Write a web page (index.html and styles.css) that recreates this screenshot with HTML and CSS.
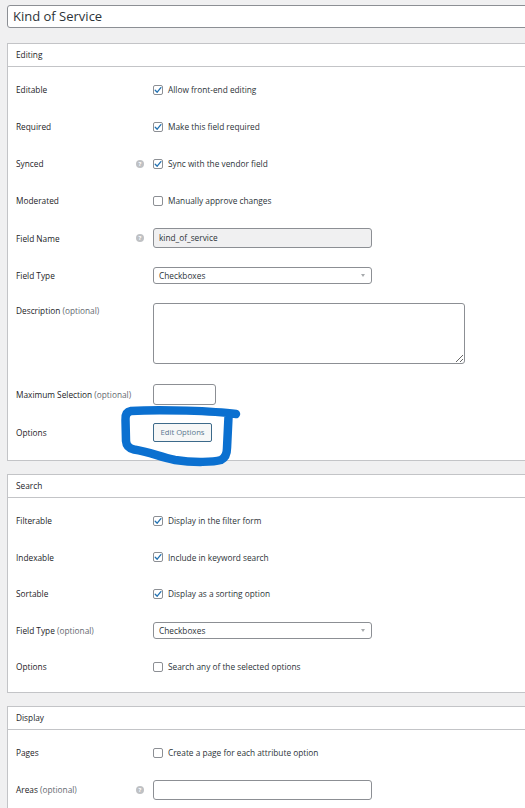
FILE: index.html
```html
<!DOCTYPE html>
<html lang="en">
<head>
<meta charset="utf-8">
<title>Kind of Service</title>
<link rel="stylesheet" href="styles.css">
</head>
<body>
<div class="page">
  <div class="title-input">Kind of Service</div>

  <section class="panel">
    <div class="panel-head">Editing</div>
    <div class="panel-body gap18">
      <div class="row">
        <div class="label">Editable</div><div class="help-slot"></div>
        <div class="control"><span class="cb checked"><svg viewBox="0 0 10 10"><path d="M2.2 5.2 L4.2 7.2 L7.9 2.6"/></svg></span><span class="cb-text">Allow front-end editing</span></div>
      </div>
      <div class="row">
        <div class="label">Required</div><div class="help-slot"></div>
        <div class="control"><span class="cb checked"><svg viewBox="0 0 10 10"><path d="M2.2 5.2 L4.2 7.2 L7.9 2.6"/></svg></span><span class="cb-text">Make this field required</span></div>
      </div>
      <div class="row">
        <div class="label">Synced</div><div class="help-slot"><span class="help">?</span></div>
        <div class="control"><span class="cb checked"><svg viewBox="0 0 10 10"><path d="M2.2 5.2 L4.2 7.2 L7.9 2.6"/></svg></span><span class="cb-text">Sync with the vendor field</span></div>
      </div>
      <div class="row">
        <div class="label">Moderated</div><div class="help-slot"></div>
        <div class="control"><span class="cb"></span><span class="cb-text">Manually approve changes</span></div>
      </div>
      <div class="row">
        <div class="label">Field Name</div><div class="help-slot"><span class="help">?</span></div>
        <div class="control"><div class="text-input readonly">kind_of_service</div></div>
      </div>
      <div class="row">
        <div class="label">Field Type</div><div class="help-slot"></div>
        <div class="control"><div class="select">Checkboxes<span class="arrow"></span></div></div>
      </div>
      <div class="row row-top">
        <div class="label">Description <span class="opt">(optional)</span></div><div class="help-slot"></div>
        <div class="control"><textarea class="textarea"></textarea></div>
      </div>
      <div class="row row-max">
        <div class="label">Maximum Selection <span class="opt">(optional)</span></div><div class="help-slot"></div>
        <div class="control"><div class="small-input"></div></div>
      </div>
      <div class="row">
        <div class="label">Options</div><div class="help-slot"></div>
        <div class="control"><span class="button">Edit Options</span></div>
      </div>
    </div>
  </section>

  <section class="panel">
    <div class="panel-head">Search</div>
    <div class="panel-body gap175">
      <div class="row">
        <div class="label">Filterable</div><div class="help-slot"></div>
        <div class="control"><span class="cb checked"><svg viewBox="0 0 10 10"><path d="M2.2 5.2 L4.2 7.2 L7.9 2.6"/></svg></span><span class="cb-text">Display in the filter form</span></div>
      </div>
      <div class="row">
        <div class="label">Indexable</div><div class="help-slot"></div>
        <div class="control"><span class="cb checked"><svg viewBox="0 0 10 10"><path d="M2.2 5.2 L4.2 7.2 L7.9 2.6"/></svg></span><span class="cb-text">Include in keyword search</span></div>
      </div>
      <div class="row">
        <div class="label">Sortable</div><div class="help-slot"></div>
        <div class="control"><span class="cb checked"><svg viewBox="0 0 10 10"><path d="M2.2 5.2 L4.2 7.2 L7.9 2.6"/></svg></span><span class="cb-text">Display as a sorting option</span></div>
      </div>
      <div class="row">
        <div class="label">Field Type <span class="opt">(optional)</span></div><div class="help-slot"></div>
        <div class="control"><div class="select">Checkboxes<span class="arrow"></span></div></div>
      </div>
      <div class="row">
        <div class="label">Options</div><div class="help-slot"></div>
        <div class="control"><span class="cb"></span><span class="cb-text">Search any of the selected options</span></div>
      </div>
    </div>
  </section>

  <section class="panel panel-last">
    <div class="panel-head">Display</div>
    <div class="panel-body gap175">
      <div class="row">
        <div class="label">Pages</div><div class="help-slot"></div>
        <div class="control"><span class="cb"></span><span class="cb-text">Create a page for each attribute option</span></div>
      </div>
      <div class="row">
        <div class="label">Areas <span class="opt">(optional)</span></div><div class="help-slot"><span class="help">?</span></div>
        <div class="control"><div class="text-input"></div></div>
      </div>
    </div>
  </section>

  <svg class="annotation" width="525" height="808" viewBox="0 0 525 808">
    <path d="M236 414 C215 411 160 409 131 411 Q125 412 125.5 420 L126 441 Q126.5 448 134 449.5 C150 452 160 457 175 460 C195 463 214 462 221 460 Q227 457 227 448 L228.5 417"/>
  </svg>
</div>
</body>
</html>
```

FILE: styles.css
```css
html, body {
  margin: 0;
  padding: 0;
  overflow: hidden;
  background: #f0f0f1;
}

.page {
  position: relative;
  padding: 5px 0 0 7px;
  height: 803px;
  overflow: hidden;
  font-family: "Open Sans", "Noto Sans", sans-serif;
  font-size: 8.3px;
  color: #2c3338;
}

.title-input {
  box-sizing: border-box;
  height: 23px;
  width: 540px;
  border: 1px solid #8c8f94;
  border-radius: 3px;
  background: #fff;
  padding: 0 0 0 5px;
  font-size: 13px;
  line-height: 21px;
  color: #2c3338;
}

.panel {
  width: 540px;
  margin-top: 15px;
  background: #fff;
  border: 1px solid #c3c4c7;
  box-sizing: border-box;
}

.panel + .panel {
  margin-top: 13px;
}

.panel-head {
  height: 22px;
  line-height: 22px;
  padding-left: 8px;
  border-bottom: 1px solid #c3c4c7;
  color: #1d2327;
}

.panel-body {
  display: flex;
  flex-direction: column;
  padding: 13px 0 18px 8px;
}

.gap18 { gap: 18px; }
.gap175 { gap: 17.5px; padding-bottom: 16px; }

.row {
  display: grid;
  grid-template-columns: 120px 17px 1fr;
  align-items: center;
  min-height: 19px;
}

.row-top {
  align-items: start;
}

.row-top .label {
  line-height: 16px;
}

.row-max {
  margin-top: 2px;
}

.label {
  color: #1d2327;
  white-space: nowrap;
}

.opt {
  color: #646970;
}

.help-slot {
  display: flex;
  align-items: center;
}

.help {
  display: inline-flex;
  align-items: center;
  justify-content: center;
  width: 8px;
  height: 8px;
  border-radius: 50%;
  background: #bfc1c4;
  color: #fff;
  font-size: 6px;
  font-weight: 700;
  line-height: 8px;
}

.control {
  display: flex;
  align-items: center;
}

.cb {
  box-sizing: border-box;
  width: 10px;
  height: 10px;
  border: 1px solid #8c8f94;
  border-radius: 2px;
  background: #fff;
  display: inline-flex;
  align-items: center;
  justify-content: center;
  flex: none;
}

.cb svg {
  width: 10px;
  height: 10px;
  margin: -1px;
}

.cb svg path {
  fill: none;
  stroke: #2271b1;
  stroke-width: 1.3;
  stroke-linecap: round;
  stroke-linejoin: round;
}

.cb-text {
  margin-left: 5px;
  color: #2c3338;
}

.text-input {
  box-sizing: border-box;
  width: 219px;
  height: 20px;
  border: 1px solid #8c8f94;
  border-radius: 3px;
  background: #fff;
  padding-left: 5px;
  line-height: 18px;
  color: #2c3338;
}

.text-input.readonly {
  background: #f0f0f1;
}

.select {
  position: relative;
  box-sizing: border-box;
  width: 219px;
  height: 17px;
  border: 1px solid #8c8f94;
  border-radius: 3px;
  background: #fff;
  padding-left: 5px;
  line-height: 15px;
  color: #2c3338;
}

.arrow {
  position: absolute;
  right: 6px;
  top: 6px;
  width: 0;
  height: 0;
  border-left: 2px solid transparent;
  border-right: 2px solid transparent;
  border-top: 3px solid #a7aaad;
}

.textarea {
  display: block;
  box-sizing: border-box;
  width: 312px;
  height: 61px;
  margin: 0;
  border: 1px solid #8c8f94;
  border-radius: 3px;
  background: #fff;
  font-family: inherit;
  font-size: inherit;
  resize: both;
}

.small-input {
  box-sizing: border-box;
  width: 63px;
  height: 21px;
  border: 1px solid #8c8f94;
  border-radius: 3px;
  background: #fff;
}

.button {
  box-sizing: border-box;
  display: inline-block;
  width: 59px;
  height: 19px;
  line-height: 17px;
  text-align: center;
  border: 1px solid #3d6a8a;
  border-radius: 2px;
  background: #f6f7f7;
  color: #5a7890;
  font-size: 7.7px;
}

.annotation {
  position: absolute;
  top: 0;
  left: 0;
  pointer-events: none;
}

.annotation path {
  fill: none;
  stroke: #0b70d0;
  stroke-width: 8.5;
  stroke-linecap: round;
  stroke-linejoin: round;
}
```
